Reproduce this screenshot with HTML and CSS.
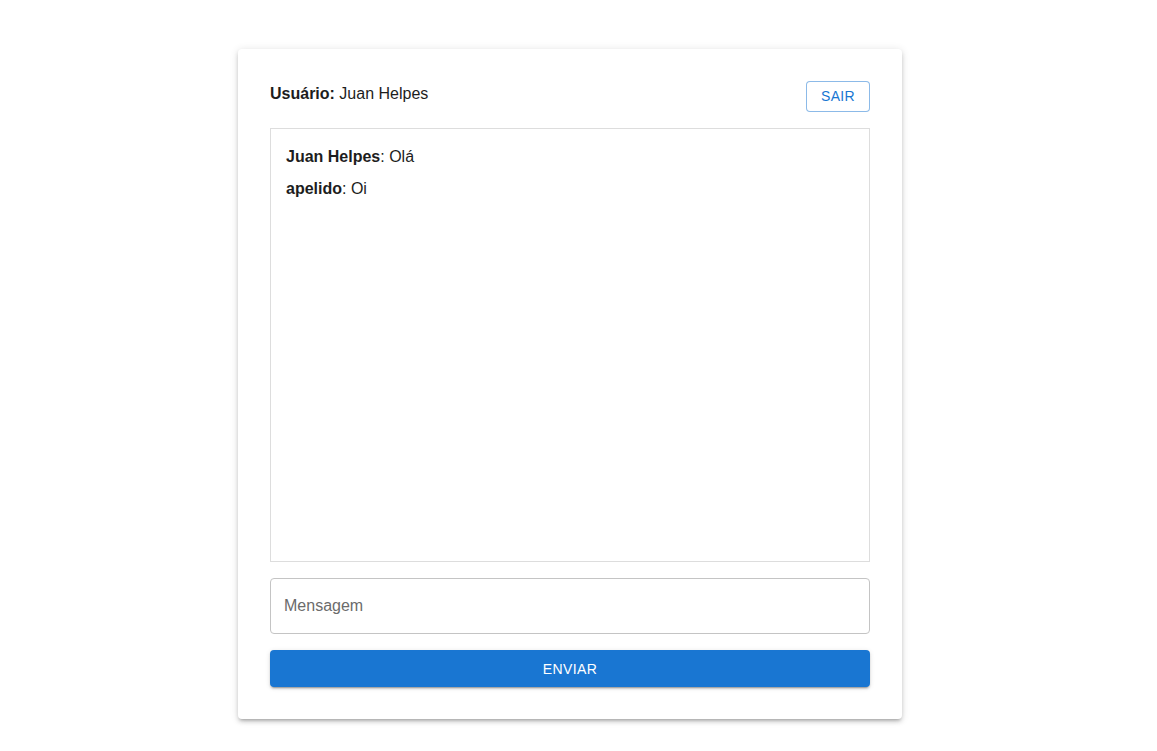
FILE: index.html
```html
<!DOCTYPE html>
<html lang="pt-BR">
<head>
<meta charset="utf-8">
<title>Chat</title>
<link rel="stylesheet" href="styles.css">
</head>
<body>
<div class="page">
  <div class="card">
    <div class="header">
      <div class="user"><strong>Usuário:</strong> Juan Helpes</div>
      <button class="btn-outline">SAIR</button>
    </div>
    <div class="chat">
      <div class="msg"><strong>Juan Helpes</strong>: Olá</div>
      <div class="msg"><strong>apelido</strong>: Oi</div>
    </div>
    <div class="field">
      <input class="input" type="text" placeholder="Mensagem">
    </div>
    <button class="btn-primary">ENVIAR</button>
  </div>
</div>
</body>
</html>
```
FILE: styles.css
```css
* { box-sizing: border-box; }
html, body {
  margin: 0;
  padding: 0;
  background: #fff;
  font-family: "Liberation Sans", Arial, sans-serif;
  color: rgba(0,0,0,0.87);
}
.page {
  width: 1140px;
  display: flex;
  justify-content: center;
  padding-top: 49px;
  padding-bottom: 24px;
}
.card {
  width: 664px;
  padding: 32px;
  background: #fff;
  border-radius: 4px;
  box-shadow: 0px 3px 3px -2px rgba(0,0,0,0.2), 0px 3px 4px 0px rgba(0,0,0,0.14), 0px 1px 8px 0px rgba(0,0,0,0.12);
  display: flex;
  flex-direction: column;
}
.header {
  display: flex;
  justify-content: space-between;
  align-items: flex-start;
  height: 30px;
  margin-bottom: 17px;
}
.user {
  font-size: 16px;
  line-height: 24px;
  padding-top: 1px;
  color: #1d1d1d;
}
.user strong { font-weight: 700; }
.btn-outline {
  font-family: "Liberation Sans", Arial, sans-serif;
  font-size: 14px;
  letter-spacing: 0.3px;
  color: #1976d2;
  background: #fff;
  border: 1px solid rgba(25,118,210,0.5);
  border-radius: 4px;
  height: 31px;
  width: 64px;
  padding: 0;
  line-height: 29px;
  cursor: pointer;
}
.chat {
  height: 434px;
  border: 1px solid #ddd;
  padding: 16px 15px;
  margin-bottom: 16px;
}
.msg {
  font-size: 16px;
  line-height: 24px;
  margin-bottom: 8px;
  color: #1d1d1d;
}
.msg strong { font-weight: 700; }
.field { margin-bottom: 16px; }
.input {
  width: 100%;
  height: 56px;
  border: 1px solid #c4c4c4;
  border-radius: 4px;
  padding: 0 13px;
  font-family: "Liberation Sans", Arial, sans-serif;
  font-size: 16px;
  color: #1d1d1d;
  outline: none;
}
.input::placeholder { color: #6b6b6b; opacity: 1; }
.btn-primary {
  width: 100%;
  height: 37px;
  border: none;
  border-radius: 4px;
  background: #1976d2;
  color: #fff;
  font-family: "Liberation Sans", Arial, sans-serif;
  font-size: 14px;
  letter-spacing: 0.4px;
  box-shadow: 0px 3px 1px -2px rgba(0,0,0,0.2), 0px 2px 2px 0px rgba(0,0,0,0.14), 0px 1px 5px 0px rgba(0,0,0,0.12);
  cursor: pointer;
}
```
